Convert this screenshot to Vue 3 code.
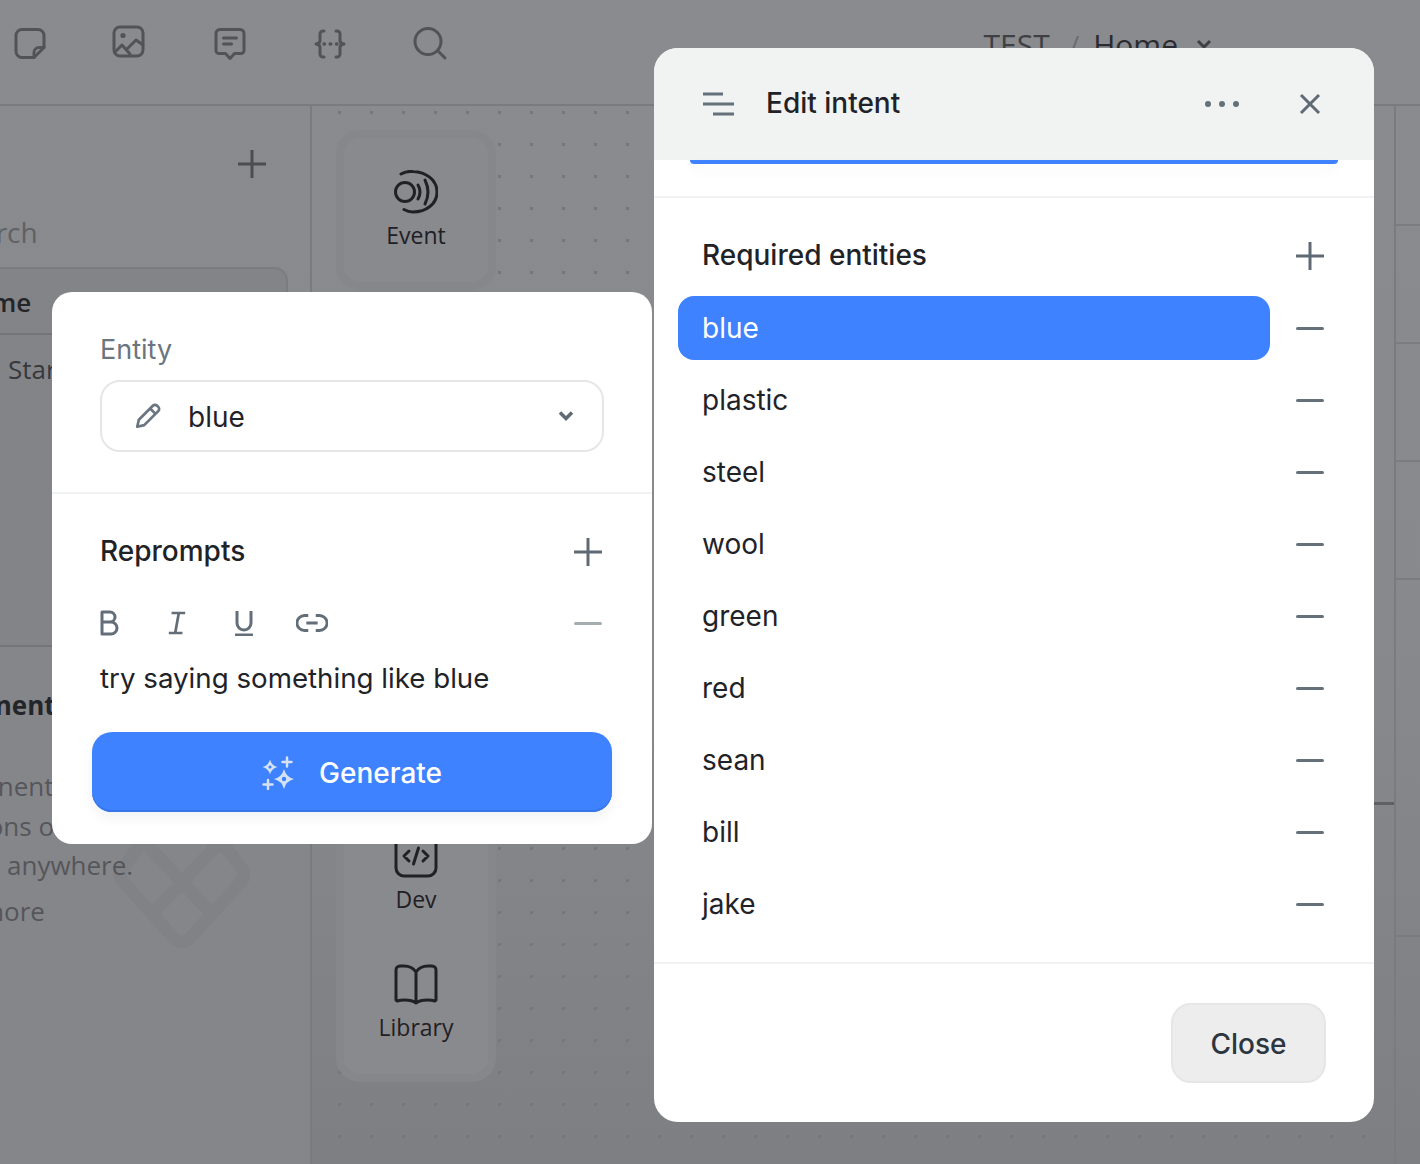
<template>
  <div class="page">
    <header class="topbar">
      <div class="tools">
        <svg class="tool" viewBox="0 0 32 32"><path d="M8 1.500h16a6 6 0 0 1 6 6v12L20 29.500H8a6 6 0 0 1-6-6v-16a6 6 0 0 1 6-6z" /><path d="M20 29.500v-5a5 5 0 0 1 5-5h5" /></svg>
        <svg class="tool" viewBox="2 2 32 32"><rect x="2" y="1" width="29" height="29" rx="6" /><circle cx="11" cy="9.500" r="2.600" class="solid" /><path d="M3 26l7-7 8 9M15 23l9-9 7 5" /></svg>
        <svg class="tool" viewBox="0 0 32 32"><path d="M6 1.500h20a4 4 0 0 1 4 4v17a3 3 0 0 1-3 3h-6.500L16 30.500l-4.500-5H5a3 3 0 0 1-3-3v-17a4 4 0 0 1 4-4z" /><path d="M9.500 10h13M9.500 16h8" /></svg>
        <svg class="tool" viewBox="0 0 32 32"><path d="M10 3H9a3 3 0 0 0-3 3v6.500q0 3-4 3.500 4 .5 4 3.500V26a3 3 0 0 0 3 3h1M22 3h1a3 3 0 0 1 3 3v6.500q0 3 4 3.500-4 .5-4 3.500V26a3 3 0 0 1-3 3h-1" /><path d="M10 16h.5M16.200 16h.5M22.500 16h.5" class="dots" /></svg>
        <svg class="tool" viewBox="0 0 32 32"><circle cx="14" cy="13.500" r="13" /><path d="M24 23l7 7" /></svg>
      </div>
      <div class="crumbs">
        <span>TEST</span>
        <span class="slash">/</span>
        <span class="crumb-home">Home</span>
        <svg class="crumb-chevron" viewBox="0 0 16 10"><path d="M2 2l6 6 6-6" /></svg>
      </div>
    </header>

    <div class="workspace">
      <aside class="sidebar">
        <div class="side-head">
          <svg class="side-plus" viewBox="0 0 28 28"><path d="M14 0v28M0 14h28" /></svg>
        </div>
        <div class="side-search">Search</div>
        <div class="side-box">
          <div class="side-home">Home</div>
          <div class="side-start">Start</div>
        </div>
        <div class="side-section">
          <div class="side-title">Components</div>
          <p class="side-line line-a">components</p>
          <p class="side-line line-b">actions or</p>
          <p class="side-line line-c">anywhere.</p>
          <p class="side-line line-d">Learn more</p>
          <svg class="watermark" viewBox="0 0 170 130">
            <path d="M44 10L22 39Q18 47 24 53L74 108Q82 116 90 108L140 53Q146 47 142 39L120 10M48 16l64 68M116 16L52 84" />
          </svg>
        </div>
      </aside>

      <main class="canvas">
        <div class="rail">
          <div class="rail-card">
            <div class="rail-item">
              <svg class="rail-icon" viewBox="0 0 44 44">
                <circle cx="11" cy="22" r="9.500" />
                <path d="M7 4a20 20 0 0 1 12-2.500C32 2 43 10 43 22S32 42 19 42a20 20 0 0 1-9-2.500" />
                <path d="M24 15q4 7 0 14M31 10q6 12 0 24" />
              </svg>
              <span>Event</span>
            </div>
          </div>
          <div class="rail-card rail-tall">
            <div class="rail-item">
              <svg class="rail-icon" viewBox="0 0 44 44">
                <rect x="2" y="2" width="40" height="40" rx="8" />
                <path d="M15 17l-5 5 5 5M29 17l5 5-5 5M24.500 14l-5 16" />
              </svg>
              <span>Dev</span>
            </div>
            <div class="rail-item">
              <svg class="rail-icon" viewBox="0 0 44 44">
                <path d="M22 10Q18 4 10 4H6a4 4 0 0 0-4 4v30l1 1q3-1 8-1 7 0 11 3 4-3 11-3 5 0 8 1l1-1V8a4 4 0 0 0-4-4h-4q-8 0-12 6zM22 10v31" />
              </svg>
              <span>Library</span>
            </div>
          </div>
        </div>
        <div class="canvas-edge"></div>
      </main>

      <aside class="inspector">
        <div class="inspector-row row-a"></div>
        <div class="inspector-row row-b"></div>
        <div class="inspector-row row-b"></div>
        <div class="inspector-row row-b"></div>
        <div class="inspector-row row-c"></div>
      </aside>
    </div>

    <section class="modal entity-modal">
      <div class="entity-top">
        <label class="field-label">Entity</label>
        <div class="select">
          <svg class="pencil" viewBox="0 0 26 26">
            <path d="M3 23l1.500-6.500L17.500 3.500a2.800 2.800 0 0 1 4 0l1 1a2.800 2.800 0 0 1 0 4L9.500 21.500z" />
            <path d="M15 6l5 5" />
          </svg>
          <span class="select-value">blue</span>
          <svg class="chevron" viewBox="0 0 16 12"><path d="M2 2.500l6 6 6-6" /></svg>
        </div>
      </div>
      <div class="entity-bottom">
        <div class="section-head">
          <h3>Reprompts</h3>
          <svg class="plus" viewBox="0 0 28 28"><path d="M14 0v28M0 14h28" /></svg>
        </div>
        <div class="format-bar">
          <div class="format-icons">
            <svg viewBox="0 0 20 26"><path d="M3 2v22h9a6 6 0 0 0 0-12H3h8a5 5 0 0 0 0-10z" /></svg>
            <svg viewBox="0 0 22 26"><path d="M5 2h15M2 24h15M13 2L9 24" /></svg>
            <svg viewBox="0 0 20 26"><path d="M3 1v12a7 7 0 0 0 14 0V1M1 25h18" /></svg>
            <svg class="format-link" viewBox="0 0 34 20"><path d="M13 2H9a8 8 0 0 0 0 16h4M21 2h4a8 8 0 0 1 0 16h-4M11 10h12" /></svg>
          </div>
          <span class="minus faded"></span>
        </div>
        <p class="reprompt-text">try saying something like blue</p>
        <button class="generate">
          <svg class="sparkle" viewBox="0 0 32 34">
            <path d="M8 3.500Q9.500 9.500 15.500 11 9.500 12.500 8 18.500 6.500 12.500.5 11 6.500 9.500 8 3.500z" />
            <path d="M22 13Q24 21 32 23 24 25 22 33 20 25 12 23 20 21 22 13z" />
            <circle cx="8" cy="11" r="1.600" class="hole" />
            <circle cx="22" cy="23" r="2.200" class="hole" />
            <path d="M25 1.500v9M20.500 6h9M6 24v9M1.500 28.500h9" class="thin" />
          </svg>
          Generate
        </button>
      </div>
    </section>

    <section class="modal intent-modal">
      <header class="intent-head">
        <svg class="lines" viewBox="0 0 32 26"><path d="M1 3h20M1 13h31M11 23h21" /></svg>
        <h2>Edit intent</h2>
        <div class="more"><i></i><i></i><i></i></div>
        <svg class="close-x" viewBox="0 0 22 22"><path d="M2 2l18 18M20 2L2 20" /></svg>
      </header>
      <div class="scroll-strip"></div>
      <div class="entities">
        <div class="entities-head">
          <h3>Required entities</h3>
          <svg class="plus" viewBox="0 0 28 28"><path d="M14 0v28M0 14h28" /></svg>
        </div>
        <div v-for="(name, i) in entities" :key="name" class="entity-row">
          <div class="entity-name" :class="{ active: i === 0 }">{{ name }}</div>
          <span class="minus"></span>
        </div>
      </div>
      <footer class="intent-foot">
        <button class="close-btn">Close</button>
      </footer>
    </section>
  </div>
</template>

<script setup>
const entities = ['blue', 'plastic', 'steel', 'wool', 'green', 'red', 'sean', 'bill', 'jake']
</script>

<style>
html,
body {
  margin: 0;
  background: #848589;
}
</style>

<style scoped>
.page {
  position: relative;
  width: 1420px;
  height: 1164px;
  overflow: hidden;
  display: flex;
  flex-direction: column;
  background: linear-gradient(180deg, #8a8b8f 0%, #88898d 55%, #7e7f82 100%);
  font-family: "Open Sans", sans-serif;
  color: #242529;
}

.topbar {
  height: 104px;
  flex: none;
  display: flex;
  justify-content: space-between;
  border-bottom: 2px solid #7a7b7f;
}

.tools {
  display: flex;
  gap: 68px;
  padding: 28px 0 0 14px;
  align-items: flex-start;
}

.tool {
  width: 32px;
  height: 32px;
  fill: none;
  stroke: #525357;
  stroke-width: 3;
  stroke-linecap: round;
  stroke-linejoin: round;
  overflow: visible;
}

.tool .solid {
  fill: #525357;
  stroke: none;
}

.tool .dots {
  stroke-width: 3.500;
}

.crumbs {
  display: flex;
  align-items: center;
  height: 30px;
  margin: 29px 208px 0 0;
  font-size: 30px;
  color: #3f4044;
}

.slash {
  margin: 0 14px 0 20px;
  color: #6a6b6f;
  font-size: 26px;
}

.crumb-home {
  color: #2a2b2f;
}

.crumb-chevron {
  width: 16px;
  height: 10px;
  margin-left: 18px;
  fill: none;
  stroke: #3f4044;
  stroke-width: 3;
}

.workspace {
  flex: 1;
  display: flex;
  min-height: 0;
}

.sidebar {
  width: 310px;
  flex: none;
  display: flex;
  flex-direction: column;
  border-right: 2px solid #7a7b7f;
  overflow: hidden;
}

.side-head {
  display: flex;
  justify-content: flex-end;
  padding: 44px 44px 0 0;
}

.side-plus {
  width: 28px;
  height: 28px;
  fill: none;
  stroke: #4c4d51;
  stroke-width: 3;
}

.side-search {
  margin: 34px 0 0 -51px;
  font-size: 28px;
  line-height: 40px;
  color: #606165;
}

.side-box {
  height: 376px;
  margin: 15px 22px 0 -40px;
  border: 2px solid #7b7c80;
  border-bottom: none;
  border-radius: 14px 14px 0 0;
  background: #838488;
}

.side-home {
  height: 64px;
  margin-left: -6px;
  font-size: 26px;
  font-weight: 600;
  line-height: 66px;
  border-bottom: 2px solid #74757a;
}

.side-start {
  margin: 14px 0 0 46px;
  font-size: 26px;
  line-height: 40px;
  color: #37383c;
}

.side-section {
  position: relative;
  flex: 1;
  border-top: 2px solid #74757a;
  background: #85868a;
}

.side-title {
  margin: 39px 0 0 -96px;
  font-size: 26px;
  font-weight: 700;
  line-height: 38px;
  white-space: nowrap;
}

.side-line {
  margin: 0;
  font-size: 26px;
  line-height: 40px;
  color: #55565a;
  white-space: nowrap;
}

.line-a {
  margin: 42px 0 0 -86px;
}

.line-b {
  margin-left: -55px;
}

.line-c {
  margin-left: 7px;
  margin-top: -1px;
}

.line-d {
  margin: 6px 0 0 -96px;
}

.watermark {
  position: absolute;
  left: 100px;
  top: 183px;
  width: 170px;
  height: 130px;
  fill: none;
  stroke: rgba(40, 42, 46, 0.04);
  stroke-width: 13;
  stroke-linejoin: round;
}

.canvas {
  position: relative;
  flex: 1;
  padding: 32px 0 0 32px;
  background-image: radial-gradient(circle at 1.5px 1.5px, #76777b 1.5px, transparent 2px);
  background-size: 32px 32px;
  background-position: 26px 5px;
}

.rail {
  width: 144px;
  display: flex;
  flex-direction: column;
  gap: 16px;
}

.rail-card {
  display: flex;
  flex-direction: column;
  padding: 8px 0;
  border-radius: 16px;
  background: #898a8e;
  box-shadow: 0 0 0 8px #86878b;
}

.rail-tall {
  height: 760px;
  justify-content: flex-end;
}

.rail-item {
  height: 128px;
  box-sizing: border-box;
  padding-top: 24px;
  display: flex;
  flex-direction: column;
  align-items: center;
  gap: 7px;
  font-size: 23px;
  font-weight: 500;
  line-height: 28px;
  color: #1f2024;
}

.rail-icon {
  width: 44px;
  height: 44px;
  fill: none;
  stroke: #202125;
  stroke-width: 3;
  stroke-linecap: round;
  stroke-linejoin: round;
}

.canvas-edge {
  position: absolute;
  right: 0;
  top: 696px;
  width: 100px;
  height: 3px;
  background: #5f6064;
}

.inspector {
  width: 24px;
  flex: none;
  display: flex;
  flex-direction: column;
  border-left: 2px solid #7a7b7f;
}

.inspector-row {
  border-bottom: 2px solid #7b7c80;
}

.row-a {
  height: 118px;
}

.row-b {
  height: 116px;
}

.row-c {
  height: 355px;
}

.modal {
  position: absolute;
  background: #fff;
  font-family: Inter, sans-serif;
  color: #1f2328;
}

.modal h2,
.modal h3 {
  margin: 0;
  font-size: 28px;
  font-weight: 500;
  line-height: 40px;
}

.entity-modal {
  left: 52px;
  top: 292px;
  width: 600px;
  height: 552px;
  border-radius: 20px;
}

.entity-top {
  padding: 43px 48px 40px;
  border-bottom: 2px solid #f1f2f3;
}

.field-label {
  display: block;
  font-size: 27px;
  line-height: 30px;
  color: #6b7580;
}

.select {
  height: 72px;
  box-sizing: border-box;
  margin-top: 15px;
  display: flex;
  align-items: center;
  padding: 0 28px 0 32px;
  border: 2px solid #e5e6e8;
  border-radius: 20px;
}

.pencil {
  width: 28px;
  height: 28px;
  fill: none;
  stroke: #6b7580;
  stroke-width: 2.500;
  stroke-linejoin: round;
}

.select-value {
  flex: 1;
  margin-left: 26px;
  padding-top: 2px;
  font-size: 28px;
}

.chevron {
  width: 16px;
  height: 12px;
  fill: none;
  stroke: #5f6a74;
  stroke-width: 3.500;
}

.entity-bottom {
  padding: 37px 48px 0;
}

.section-head {
  display: flex;
  align-items: center;
  justify-content: space-between;
  padding-right: 2px;
}

.plus {
  width: 28px;
  height: 28px;
  margin-top: 2px;
  fill: none;
  stroke: #5f6a74;
  stroke-width: 3;
}

.format-bar {
  height: 32px;
  margin-top: 36px;
  display: flex;
  align-items: center;
  justify-content: space-between;
  padding-right: 2px;
}

.format-icons {
  display: flex;
  align-items: center;
  gap: 47.500px;
  margin-left: -1px;
}

.format-icons svg {
  width: 20px;
  height: 26px;
  fill: none;
  stroke: #636e78;
  stroke-width: 3;
  stroke-linejoin: round;
}

.format-icons .format-link {
  width: 32px;
  height: 20px;
  margin-left: -5.500px;
}

.minus {
  display: block;
  width: 28px;
  height: 3px;
  border-radius: 2px;
  background: #65717a;
}

.minus.faded {
  background: #a6adb1;
}

.reprompt-text {
  margin: 20px 0 0;
  font-size: 27.700px;
  line-height: 38px;
}

.generate {
  width: 520px;
  height: 80px;
  margin: 35px -8px 0;
  padding: 2px 0 0;
  display: flex;
  align-items: center;
  justify-content: center;
  gap: 25px;
  border: none;
  border-radius: 20px;
  background: #3e82ff;
  box-shadow: inset 0 -2px 0 #3776e8, 0 6px 14px rgba(20, 30, 60, 0.06);
  color: #fff;
  font-family: Inter, sans-serif;
  font-size: 28px;
  font-weight: 500;
}

.sparkle {
  width: 32px;
  height: 34px;
  fill: #d5e2f2;
}

.sparkle .hole {
  fill: #3e82ff;
}

.sparkle .thin {
  fill: none;
  stroke: #d5e2f2;
  stroke-width: 2.500;
  stroke-linecap: round;
}

.intent-modal {
  left: 654px;
  top: 48px;
  width: 720px;
  height: 1074px;
  border-radius: 24px;
  overflow: hidden;
}

.intent-head {
  height: 112px;
  box-sizing: border-box;
  padding: 0 53px 0 48px;
  display: flex;
  align-items: center;
  background: #f1f3f2;
}

.intent-head h2 {
  flex: 1;
  margin-left: 32px;
  padding-bottom: 2px;
}

.lines {
  width: 32px;
  height: 26px;
  fill: none;
  stroke: #65717a;
  stroke-width: 3;
}

.more {
  display: flex;
  gap: 8px;
  margin-right: 60px;
}

.more i {
  width: 6px;
  height: 6px;
  border-radius: 50%;
  background: #65717a;
}

.close-x {
  width: 22px;
  height: 22px;
  fill: none;
  stroke: #5f6a74;
  stroke-width: 3;
}

.scroll-strip {
  height: 4px;
  margin: 0 36px;
  border-radius: 0 0 10px 10px;
  background: #3e82ff;
  box-shadow: 0 6px 14px rgba(20, 30, 60, 0.05);
}

.entities {
  margin-top: 32px;
  padding: 37px 50px 26px 24px;
  border-top: 2px solid #f1f2f3;
  border-bottom: 2px solid #f1f2f3;
}

.entities-head {
  display: flex;
  align-items: center;
  justify-content: space-between;
  padding-left: 24px;
  margin-bottom: 21px;
}

.entity-row {
  height: 64px;
  display: flex;
  align-items: center;
  justify-content: space-between;
  margin-bottom: 8px;
}

.entity-row:last-child {
  margin-bottom: 0;
}

.entity-name {
  width: 592px;
  height: 64px;
  box-sizing: border-box;
  padding-left: 24px;
  border-radius: 16px;
  font-size: 28px;
  line-height: 65px;
}

.entity-name.active {
  background: #3e82ff;
  color: #fff;
}

.intent-foot {
  display: flex;
  justify-content: flex-end;
  padding: 39px 48px 0 0;
}

.close-btn {
  width: 155px;
  height: 80px;
  padding: 2px 0 0;
  border: 2px solid #e6e6e7;
  border-radius: 20px;
  background: #ededee;
  color: #2c3640;
  font-family: Inter, sans-serif;
  font-size: 28px;
  font-weight: 500;
}
</style>
